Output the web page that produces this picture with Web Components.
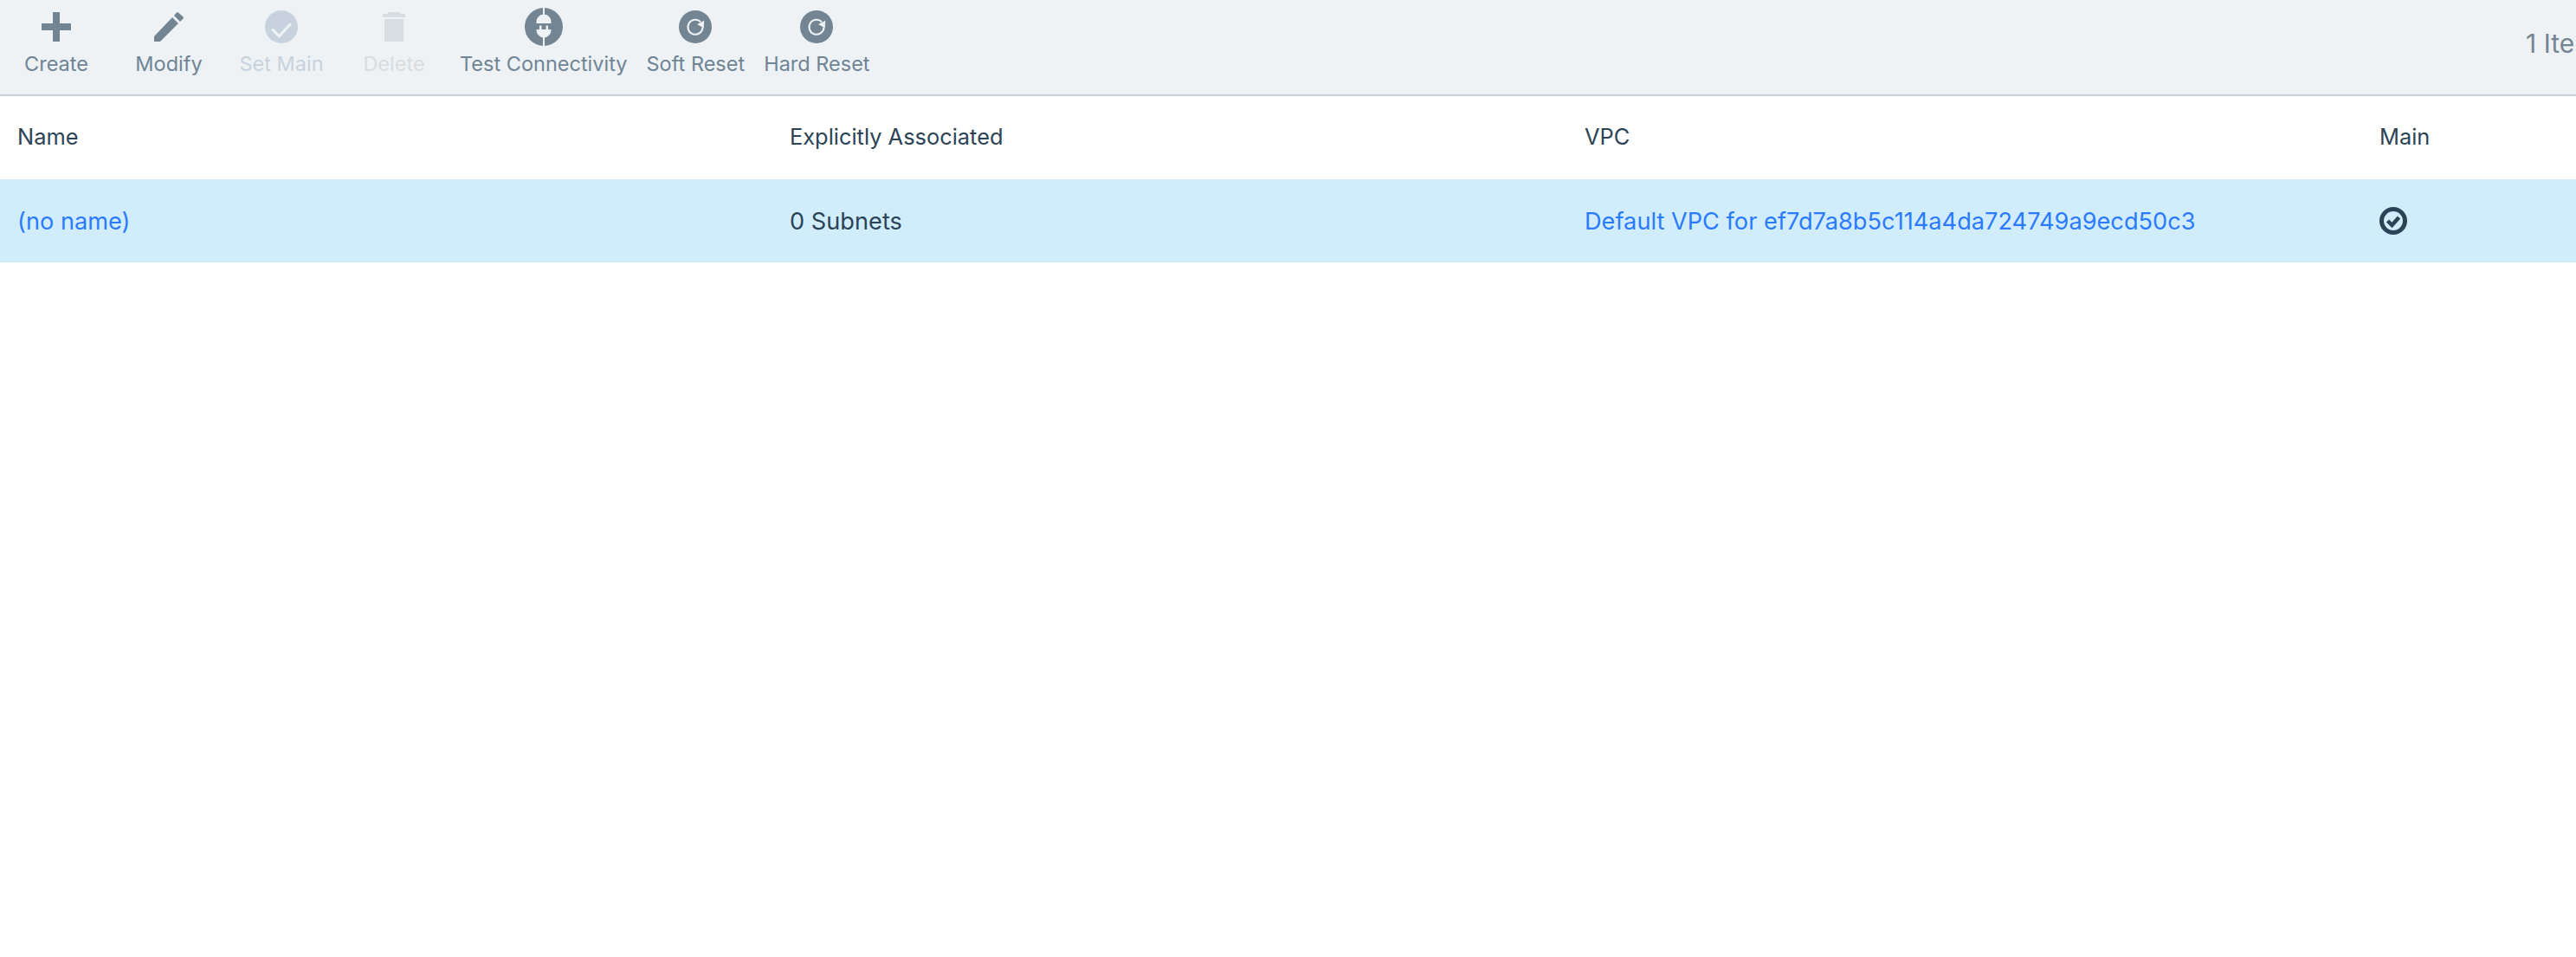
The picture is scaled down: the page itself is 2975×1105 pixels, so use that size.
<!DOCTYPE html>
<html><head><meta charset="utf-8"><style>
html,body{margin:0;height:100%;background:#fff;overflow:hidden}
body{font-family:Inter,"Noto Sans",sans-serif;color:#2b4356}
</style></head><body>
<vpc-route-view>
<ui-toolbar count="1 Items" slot="toolbar">
<tool-button label="Create"><svg width="34" height="34" viewBox="0 0 34 34"><path fill="#738593" d="M13 0h8v13h13v8H21v13h-8V21H0v-8h13z"/></svg></tool-button>
<tool-button label="Modify"><svg width="34" height="34" viewBox="0 0 34 34"><path fill="#738593" d="M0 34v-6L21 6l7 7L7 34zM23 4l3-3.400q1-.8 2 0l5.500 5q.8 1 0 2L30 11z"/></svg></tool-button>
<tool-button label="Set Main" state="off"><svg width="38" height="38" viewBox="0 0 37 37"><circle cx="18.500" cy="18.500" r="18.500" fill="#c7d2de"/><path d="M8 21l8 8 13-14" fill="none" stroke="#eef2f4" stroke-width="3"/></svg></tool-button>
<tool-button label="Delete" state="dim"><svg width="26" height="34" viewBox="0 0 26 34"><path fill="#d8dde1" d="M0 2h6V0h14v2h6v4H0zM2 8h22v26H2z"/></svg></tool-button>
<tool-button label="Test Connectivity" wide><svg width="44" height="44" viewBox="0 0 44 44"><circle cx="22" cy="22" r="22" fill="#738593"/><path fill="#eef2f4" d="M21 0h2v9h-2zM13.500 18v-2a8.500 8.500 0 0 1 17 0v2zM17 20.500h2.500V26H17zM24.500 20.500H27V26h-2.500zM13.500 25h17v1a8.500 8.500 0 0 1-7.500 8.400V44h-2v-9.600A8.500 8.500 0 0 1 13.500 26z"/></svg></tool-button>
<tool-button label="Soft Reset" wide><svg width="38" height="38" viewBox="0 0 37 37"><circle cx="18.500" cy="18.500" r="18.500" fill="#738593"/><path d="M24.500 13a8.300 8.300 0 1 0 2.300 6" fill="none" stroke="#eef2f4" stroke-width="2"/><path fill="#eef2f4" d="M28.500 11.500l-.5 8.500-7.500-4.500z"/></svg></tool-button>
<tool-button label="Hard Reset" wide><svg width="38" height="38" viewBox="0 0 37 37"><circle cx="18.500" cy="18.500" r="18.500" fill="#738593"/><path d="M24.500 13a8.300 8.300 0 1 0 2.300 6" fill="none" stroke="#eef2f4" stroke-width="2"/><path fill="#eef2f4" d="M28.500 11.500l-.5 8.500-7.500-4.500z"/></svg></tool-button>
</ui-toolbar>
<table-row kind="head"><span>Name</span><span>Explicitly Associated</span><span>VPC</span><span>Main</span></table-row>
<table-row kind="selected"><a-link>(no name)</a-link><span>0 Subnets</span><a-link>Default VPC for ef7d7a8b5c114a4da724749a9ecd50c3</a-link><span style="display:flex"><svg width="32" height="32" viewBox="0 0 32 32"><circle cx="16" cy="16" r="13.500" fill="none" stroke="#2b4356" stroke-width="5"/><path d="M9.500 16l5 5 8-9" fill="none" stroke="#2b4356" stroke-width="4.500"/></svg></span></table-row>
</vpc-route-view>
<script>
function def(name,css,html,init){
  customElements.define(name,class extends HTMLElement{
    constructor(){super();const r=this.attachShadow({mode:'open'});r.innerHTML='<style>'+css+'</style>'+html;}
    connectedCallback(){init&&init(this)}
  });
}
def('vpc-route-view',':host{display:flex;flex-direction:column;width:100%;overflow:hidden}','<slot name="toolbar"></slot><slot></slot>');
def('ui-toolbar',
 ':host{display:flex;height:109px;background:#eef2f4;border-bottom:2px solid #c5d1dc;overflow:hidden}.left{display:flex;flex:0 0 2917px}.count{flex:none;font-size:30px;line-height:100px;color:#738593;white-space:nowrap}',
 '<div class="left"><slot></slot></div><div class="count"></div>',
 el=>{el.shadowRoot.querySelector('.count').textContent=el.getAttribute('count')});
def('tool-button',
 ':host{display:flex;flex-direction:column;align-items:center;min-width:130px;box-sizing:border-box;color:#6f8494;font-size:23.500px}:host([wide]){min-width:0;padding:0 11px}:host([state=off]){color:#c7d2de}:host([state=dim]){color:#d8dde1}.i{height:62px;display:flex;align-items:center;justify-content:center}.l{line-height:23px;white-space:nowrap}',
 '<div class="i"><slot></slot></div><div class="l"></div>',
 el=>{el.shadowRoot.querySelector('.l').textContent=el.getAttribute('label')});
def('table-row',
 ':host{display:grid;grid-template-columns:892px 918px 918px 1fr;height:96px;align-items:center;font-size:27.200px;color:#2b4356}:host([kind=head]){font-size:25.400px;box-sizing:border-box;padding-bottom:3px}:host([kind=selected]){background:#d1edfc}::slotted(*){padding-left:20px}',
 '<slot></slot>');
def('a-link',':host{display:block;color:#2a7bff;white-space:nowrap}','<slot></slot>');
</script>
</body></html>
